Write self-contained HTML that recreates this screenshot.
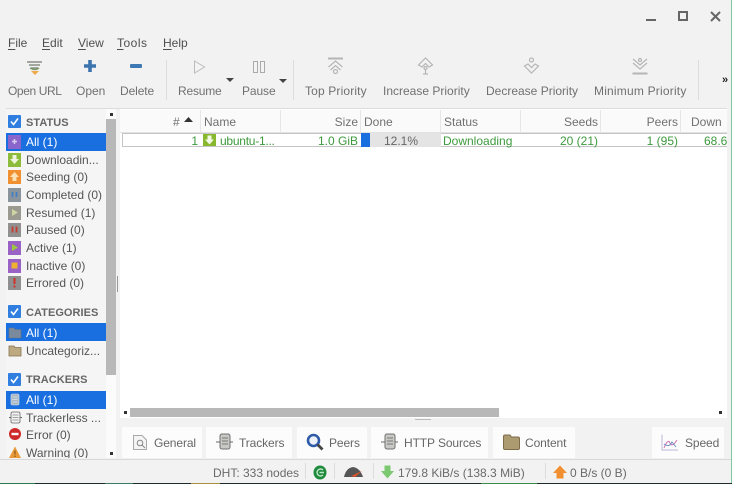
<!DOCTYPE html>
<html><head><meta charset="utf-8">
<style>
html,body{margin:0;padding:0;width:732px;height:484px;overflow:hidden;background:#f2f2f2}
body{position:relative;font-family:"Liberation Sans",sans-serif;font-size:12px;color:#5f5f5f}
#w{position:absolute;left:0;top:0;width:732px;height:484px;filter:blur(.35px)}
.t{position:absolute;white-space:nowrap;line-height:14px;height:14px}
.r{text-align:right}
.b{position:absolute}
.m{color:#4f4f4f;top:36px}
.m u{text-decoration-thickness:1px;text-underline-offset:2px}
.tb{color:#707070;top:84px}
.s{left:26px;color:#555}
.w{color:#fff}
.h{left:26px;font-weight:bold;color:#666;font-size:11px;letter-spacing:.05px}
.th{top:115px;color:#707070}
.g{top:134px;color:#3d9a3d}
.sel{position:absolute;left:6px;width:100px;background:#1a6fe0}
.ic{position:absolute;left:8px;width:13px;height:14px}
.tab{position:absolute;top:427px;height:31px;background:#fcfcfc}
.sep{position:absolute;width:1px;background:#dcdcdc}
.tl{top:436px;color:#666;letter-spacing:-.1px}
svg{position:absolute;overflow:visible}
</style></head><body><div id="w">

<!-- window controls -->
<div class="b" style="left:646px;top:19px;width:10px;height:2px;background:#666"></div>
<div class="b" style="left:678px;top:11px;width:6px;height:6px;border:2px solid #666"></div>
<svg style="left:710px;top:11px" width="11" height="11"><path d="M1 1L10 10M10 1L1 10" stroke="#666" stroke-width="2"/></svg>

<!-- menu -->
<span class="t m" style="left:8px"><u>F</u>ile</span>
<span class="t m" style="left:42px"><u>E</u>dit</span>
<span class="t m" style="left:78px"><u>V</u>iew</span>
<span class="t m" style="left:117px;letter-spacing:.5px"><u>T</u>ools</span>
<span class="t m" style="left:163px"><u>H</u>elp</span>

<!-- toolbar icons -->
<svg style="left:26px;top:60px" width="18" height="16"><path d="M1 2H16M3 5H14M5 8H12" stroke="#8a8f86" stroke-width="1.500" fill="none"/><path d="M4 8Q9 11 13 8" stroke="#7c9a6a" stroke-width="1.500" fill="none"/><path d="M5 11H13L9 15Z" fill="#f0a848"/></svg>
<svg style="left:84px;top:60px" width="12" height="12"><path d="M6 0V12M0 6H12" stroke="#3d74b0" stroke-width="3.600"/></svg>
<div class="b" style="left:130px;top:64px;width:12px;height:4px;background:#3f79b4;border-radius:1px"></div>
<div class="sep" style="left:166px;top:60px;height:40px"></div>
<svg style="left:193px;top:60px" width="13" height="14"><path d="M1.500 1L11.500 7L1.500 13Z" fill="#f4f4f4" stroke="#bbb"/></svg>
<svg style="left:253px;top:61px" width="13" height="12"><path d="M.5.5H4.500V11.500H.5ZM7.500.5H11.500V11.500H7.500Z" fill="#f4f4f4" stroke="#aaa"/></svg>
<svg style="left:226px;top:78px" width="8" height="5"><path d="M0 0H8L4 4Z" fill="#444"/></svg>
<svg style="left:279px;top:79px" width="8" height="5"><path d="M0 0H8L4 4Z" fill="#444"/></svg>
<div class="sep" style="left:293px;top:60px;height:40px"></div>
<svg style="left:327px;top:57px" width="18" height="18" fill="none" stroke="#b5b5b5" stroke-width="1.200"><path d="M1 1.500H16" stroke-width="2"/><path d="M1.500 10L8.500 4L15.500 10M3.500 13L8.500 8.500L13.500 13"/><circle cx="8.500" cy="14.500" r="2"/></svg>
<svg style="left:418px;top:57px" width="16" height="18" fill="none" stroke="#b5b5b5" stroke-width="1.200"><path d="M.5 8L7.500 1L14.500 8L11 10L7.500 6.500L4 10Z"/><circle cx="7.500" cy="11" r="1.500"/><path d="M7.500 12.500V17M5 17H10"/></svg>
<svg style="left:524px;top:57px" width="16" height="18" fill="none" stroke="#b5b5b5" stroke-width="1.200"><circle cx="7.500" cy="3" r="2"/><path d="M.5 9L7.500 16L14.500 9L11 7L7.500 10.500L4 7Z"/></svg>
<svg style="left:632px;top:57px" width="16" height="18" fill="none" stroke="#b5b5b5" stroke-width="1.200"><path d="M1 2L8 8L15 2M1 6L8 12L15 6"/><circle cx="8" cy="3" r="1.500"/><path d="M.5 16.500H15.500" stroke-width="2"/></svg>
<div class="sep" style="left:698px;top:60px;height:40px"></div>
<span class="t" style="left:722px;top:73px;color:#222;font-size:11px;font-weight:bold">»</span>

<!-- toolbar text -->
<span class="t tb" style="left:8px;letter-spacing:-.4px">Open URL</span>
<span class="t tb" style="left:76px">Open</span>
<span class="t tb" style="left:120px;letter-spacing:-.1px">Delete</span>
<span class="t tb" style="left:178px;letter-spacing:-.2px">Resume</span>
<span class="t tb" style="left:242px;letter-spacing:-.1px">Pause</span>
<span class="t tb" style="left:305px;letter-spacing:.15px">Top Priority</span>
<span class="t tb" style="left:383px">Increase Priority</span>
<span class="t tb" style="left:486px">Decrease Priority</span>
<span class="t tb" style="left:594px;letter-spacing:.2px">Minimum Priority</span>
<div class="b" style="left:6px;top:108px;width:721px;height:1px;background:#dcdcdc"></div>

<!-- sidebar -->
<div class="b" style="left:6px;top:109px;width:100px;height:349px;background:#f5f5f5"></div>
<div class="b" style="left:106px;top:109px;width:10px;height:349px;background:#fbfbfb"></div>
<div class="b" style="left:106px;top:119px;width:10px;height:256px;background:#b8b8b8"></div>
<div class="b" style="left:110px;top:113px;width:3px;height:3px;background:#333"></div>
<div class="b" style="left:110px;top:452px;width:3px;height:3px;background:#333"></div>
<div class="b" style="left:117px;top:276px;width:1px;height:16px;background:#999"></div>

<div class="sel" style="top:133px;height:18px"></div>
<div class="sel" style="top:323px;height:18px"></div>
<div class="sel" style="top:391px;height:18px"></div>

<svg style="left:8px;top:115px" width="13" height="13"><rect width="13" height="13" rx="1" fill="#2f7ee0"/><path d="M3 6.500L5.500 9.500L10 3.500" stroke="#fff" stroke-width="1.600" fill="none"/></svg>
<svg style="left:8px;top:305px" width="13" height="13"><rect width="13" height="13" rx="1" fill="#2f7ee0"/><path d="M3 6.500L5.500 9.500L10 3.500" stroke="#fff" stroke-width="1.600" fill="none"/></svg>
<svg style="left:8px;top:373px" width="13" height="13"><rect width="13" height="13" rx="1" fill="#2f7ee0"/><path d="M3 6.500L5.500 9.500L10 3.500" stroke="#fff" stroke-width="1.600" fill="none"/></svg>

<!-- status icons -->
<div class="ic" style="top:135px;background:#8a66cc"></div>
<div class="ic" style="top:153px;background:#8cbc3a"></div>
<div class="ic" style="top:170px;background:#f09030"></div>
<div class="ic" style="top:188px;background:#8a949c"></div>
<div class="ic" style="top:206px;background:#9a9a90"></div>
<div class="ic" style="top:223px;background:#909090"></div>
<div class="ic" style="top:241px;background:#9a62c4"></div>
<div class="ic" style="top:259px;background:#9a62c4"></div>
<div class="ic" style="top:276px;background:#8f8f8f"></div>
<svg style="left:8px;top:135px" width="13" height="13"><path d="M6.500 4V9M4 6.500H9" stroke="#d8ccf0" stroke-width="1.500"/></svg>
<svg style="left:8px;top:153px" width="13" height="13"><path d="M4.500 2H8.500V6H11L6.500 11L2 6H4.500Z" fill="#eef5dc"/></svg>
<svg style="left:8px;top:170px" width="13" height="13"><path d="M6.500 2L11 7H8.500V11H4.500V7H2Z" fill="#fde2b8"/></svg>
<svg style="left:8px;top:188px" width="13" height="13"><path d="M4.500 4V9M8.500 4V9" stroke="#3d7fc4" stroke-width="1.600"/></svg>
<svg style="left:8px;top:206px" width="13" height="13"><path d="M4 3L10 6.500L4 10Z" fill="#cfd4a0"/></svg>
<svg style="left:8px;top:223px" width="13" height="13"><path d="M4.500 3.500V9.500M8.500 3.500V9.500" stroke="#c83a30" stroke-width="1.800"/></svg>
<svg style="left:8px;top:241px" width="13" height="13"><path d="M4 3L10 6.500L4 10Z" fill="#9cc83c"/></svg>
<svg style="left:8px;top:259px" width="13" height="13"><rect x="3.500" y="3.500" width="6" height="6" fill="#f0b030"/></svg>
<svg style="left:8px;top:276px" width="13" height="13"><path d="M6.500 2V8M6.500 9.500V11.500" stroke="#d03028" stroke-width="2"/></svg>

<span class="t h" style="top:116px">STATUS</span>
<span class="t w" style="left:26px;top:135px">All (1)</span>
<span class="t s" style="top:153px">Downloadin...</span>
<span class="t s" style="top:170px">Seeding (0)</span>
<span class="t s" style="top:188px">Completed (0)</span>
<span class="t s" style="top:206px">Resumed (1)</span>
<span class="t s" style="top:223px">Paused (0)</span>
<span class="t s" style="top:241px">Active (1)</span>
<span class="t s" style="top:259px">Inactive (0)</span>
<span class="t s" style="top:276px">Errored (0)</span>

<span class="t h" style="top:306px">CATEGORIES</span>
<svg style="left:8px;top:326px" width="14" height="13"><path d="M1 2H6L7 3.500H13V12H1Z" fill="#7b8a9c" stroke="#66727f" stroke-width=".6"/></svg>
<span class="t w" style="left:26px;top:326px">All (1)</span>
<svg style="left:8px;top:344px" width="14" height="13"><path d="M1 2H6L7 3.500H13V12H1Z" fill="#bdaa80" stroke="#85734f" stroke-width=".8"/></svg>
<span class="t s" style="top:344px">Uncategoriz...</span>

<span class="t h" style="top:373px">TRACKERS</span>
<svg style="left:9px;top:393px" width="12" height="13"><rect x="2" y="1" width="8" height="11" rx="1.500" fill="#a8b8c6" stroke="#dde4ea" stroke-width=".6"/><path d="M3.500 4H8.500M3.500 6.500H8.500M3.500 9H8.500" stroke="#dfe6ec" stroke-width=".7"/></svg>
<span class="t w" style="left:26px;top:393px">All (1)</span>
<svg style="left:9px;top:411px" width="13" height="13"><rect x="2" y="1" width="9" height="11" rx="1.500" fill="#f2f2f2" stroke="#666" stroke-width=".8"/><path d="M3.500 4H9.500M3.500 6.500H9.500M3.500 9H9.500" stroke="#888" stroke-width=".7"/><path d="M0 6.500H2M11 6.500H13" stroke="#666"/></svg>
<span class="t s" style="top:411px">Trackerless ...</span>
<svg style="left:9px;top:428px" width="12" height="12"><circle cx="6" cy="6" r="6" fill="#cf2a2a"/><rect x="2.500" y="4.800" width="7" height="2.400" fill="#fff"/></svg>
<span class="t s" style="top:428px">Error (0)</span>
<svg style="left:9px;top:446px" width="12" height="12"><path d="M6 .5L12 12H0Z" fill="#e89a3a"/><path d="M6 4.500V8.500M6 9.500V11" stroke="#7a4a10" stroke-width="1"/></svg>
<span class="t s" style="top:446px">Warning (0)</span>
<div class="b" style="left:0;top:458px;width:120px;height:3px;background:#f2f2f2"></div>

<!-- table -->
<div class="b" style="left:120px;top:109px;width:607px;height:309px;background:#fff"></div>
<div class="b" style="left:120px;top:110px;width:607px;height:22px;background:#fafafa;border-bottom:1px solid #e2e2e2"></div>
<div class="sep" style="left:200px;top:110px;height:22px;background:#e6e6e6"></div>
<div class="sep" style="left:280px;top:110px;height:22px;background:#e6e6e6"></div>
<div class="sep" style="left:360px;top:110px;height:22px;background:#e6e6e6"></div>
<div class="sep" style="left:440px;top:110px;height:22px;background:#e6e6e6"></div>
<div class="sep" style="left:520px;top:110px;height:22px;background:#e6e6e6"></div>
<div class="sep" style="left:600px;top:110px;height:22px;background:#e6e6e6"></div>
<div class="sep" style="left:680px;top:110px;height:22px;background:#e6e6e6"></div>
<span class="t th" style="left:173px">#</span>
<svg style="left:184px;top:117px" width="9" height="5"><path d="M0 5L4.500 0L9 5Z" fill="#333"/></svg>
<span class="t th" style="left:204px">Name</span>
<span class="t th r" style="left:300px;width:58px">Size</span>
<span class="t th" style="left:364px">Done</span>
<span class="t th" style="left:444px">Status</span>
<span class="t th r" style="left:540px;width:58px">Seeds</span>
<span class="t th r" style="left:620px;width:58px">Peers</span>
<span class="t th" style="left:691px">Down</span>

<div class="b" style="left:122px;top:133px;width:605px;height:14px;border:1px solid #c4c4c4;border-right:0;box-sizing:border-box"></div>
<div class="b" style="left:361px;top:133px;width:80px;height:14px;background:#e4e4e4"></div>
<div class="b" style="left:361px;top:133px;width:9px;height:14px;background:#1a6fe0"></div>
<span class="t g r" style="left:160px;width:38px">1</span>
<svg style="left:203px;top:134px" width="13" height="12"><rect width="13" height="12" fill="#88b82e"/><path d="M4.500 1.500H8.500V5.500H11L6.500 10.500L2 5.500H4.500Z" fill="#f2f8e4"/></svg>
<span class="t g" style="left:220px;letter-spacing:-.25px">ubuntu-1...</span>
<span class="t g r" style="left:300px;width:58px">1.0 GiB</span>
<span class="t" style="left:371px;width:60px;top:134px;color:#666;text-align:center">12.1%</span>
<span class="t g" style="left:443px">Downloading</span>
<span class="t g r" style="left:520px;width:78px">20 (21)</span>
<span class="t g r" style="left:620px;width:58px">1 (95)</span>
<span class="t g" style="left:704px;width:23px;overflow:hidden">68.6</span>

<!-- h scroll -->
<div class="b" style="left:130px;top:408px;width:369px;height:9px;background:#b8b8b8"></div>
<div class="b" style="left:124px;top:411px;width:3px;height:3px;background:#333"></div>
<div class="b" style="left:719px;top:411px;width:3px;height:3px;background:#333"></div>
<div class="b" style="left:415px;top:419px;width:16px;height:1px;background:#bbb"></div>

<!-- tabs -->
<div class="tab" style="left:122px;width:80px"></div>
<div class="tab" style="left:206px;width:86px"></div>
<div class="tab" style="left:297px;width:70px"></div>
<div class="tab" style="left:371px;width:117px"></div>
<div class="tab" style="left:493px;width:82px"></div>
<div class="tab" style="left:652px;width:72px"></div>

<svg style="left:132px;top:434px" width="16" height="17" fill="none" stroke="#a8a8a8"><path d="M1.500 1.500H10L14.500 6V15.500H1.500Z" fill="#f4f4f4"/><circle cx="8" cy="9" r="2.800" stroke="#888"/><path d="M10 11L13 14" stroke="#888"/></svg>
<svg style="left:216px;top:433px" width="18" height="17"><rect x="4" y="1" width="10" height="15" rx="2" fill="#c8c8c4" stroke="#6f6f6f"/><path d="M6 5H12M6 8H12M6 11H12" stroke="#777"/><path d="M0 9H4M14 9H17" stroke="#666"/></svg>
<svg style="left:306px;top:433px" width="18" height="18" fill="none"><circle cx="7.500" cy="7.500" r="5.500" stroke="#2e5aa8" stroke-width="2.600" fill="#eef2fa"/><path d="M11.500 11.500L16.500 16.500" stroke="#444" stroke-width="2.800"/></svg>
<svg style="left:381px;top:433px" width="18" height="17"><rect x="4" y="1" width="10" height="15" rx="2" fill="#c8c8c4" stroke="#6f6f6f"/><path d="M6 5H12M6 8H12M6 11H12" stroke="#777"/><path d="M0 9H4M14 9H17" stroke="#666"/></svg>
<svg style="left:503px;top:434px" width="17" height="16"><path d="M.5 2.500Q.5 1 2 1H7L8.500 3H15Q16.500 3 16.500 4.500V14Q16.500 15.500 15 15.500H2Q.5 15.500 .5 14Z" fill="#ac9a70" stroke="#7d6c48"/></svg>
<svg style="left:661px;top:434px" width="18" height="17" fill="none"><path d="M1 .5V16H17" stroke="#b8b8d8"/><path d="M3 14Q7 4 9 9T16 6" stroke="#d070b0"/><path d="M3 10Q8 14 11 8L15 13" stroke="#7090c0"/></svg>

<span class="t tl" style="left:154px">General</span>
<span class="t tl" style="left:239px">Trackers</span>
<span class="t tl" style="left:329px">Peers</span>
<span class="t tl" style="left:404px">HTTP Sources</span>
<span class="t tl" style="left:525px">Content</span>
<span class="t tl" style="left:685px">Speed</span>

<!-- status bar -->
<div class="b" style="left:0;top:459px;width:732px;height:1px;background:#d8d8d8"></div>
<span class="t" style="left:213px;top:466px;color:#6a6a6a">DHT: 333 nodes</span>
<div class="sep" style="left:305px;top:463px;height:16px"></div>
<svg style="left:313px;top:465px" width="14" height="15"><ellipse cx="7" cy="7.500" rx="6.500" ry="7" fill="#1f8a3c"/><path d="M10 5A3.500 3.500 0 1 0 10 10M6.500 7.500H11" stroke="#bde6c4" stroke-width="1.400" fill="none"/></svg>
<div class="sep" style="left:334px;top:463px;height:16px"></div>
<svg style="left:343px;top:466px" width="22" height="12"><path d="M1 11Q3 2 10 1Q17 2 20 11Z" fill="#555"/><path d="M8 10L19 5L12 11Z" fill="#d8562a"/></svg>
<div class="sep" style="left:373px;top:463px;height:16px"></div>
<svg style="left:381px;top:465px" width="13" height="14"><path d="M3.500 .5H9.500V6H13L6.500 13.500L0 6H3.500Z" fill="#7cc870"/></svg>
<span class="t" style="left:398px;top:466px;color:#6a6a6a">179.8 KiB/s (138.3 MiB)</span>
<div class="sep" style="left:545px;top:463px;height:16px"></div>
<svg style="left:553px;top:465px" width="14" height="14"><path d="M7 .5L14 8H10.500V13.500H3.500V8H0Z" fill="#f09030"/></svg>
<span class="t" style="left:570px;top:466px;color:#6a6a6a">0 B/s (0 B)</span>

<!-- screen edge -->
<div class="b" style="left:731px;top:0;width:1px;height:484px;background:#7fc8a0"></div>
<div class="b" style="left:0;top:483px;width:732px;height:1px;background:#1c2c2c"></div>
<div class="b" style="left:0;top:483px;width:35px;height:1px;background:#2a7a50"></div>
<div class="b" style="left:105px;top:483px;width:28px;height:1px;background:#3a7a60"></div>
<div class="b" style="left:191px;top:483px;width:29px;height:1px;background:#a89040"></div>
<div class="b" style="left:481px;top:483px;width:56px;height:1px;background:#3a8a50"></div>
</div></body></html>
